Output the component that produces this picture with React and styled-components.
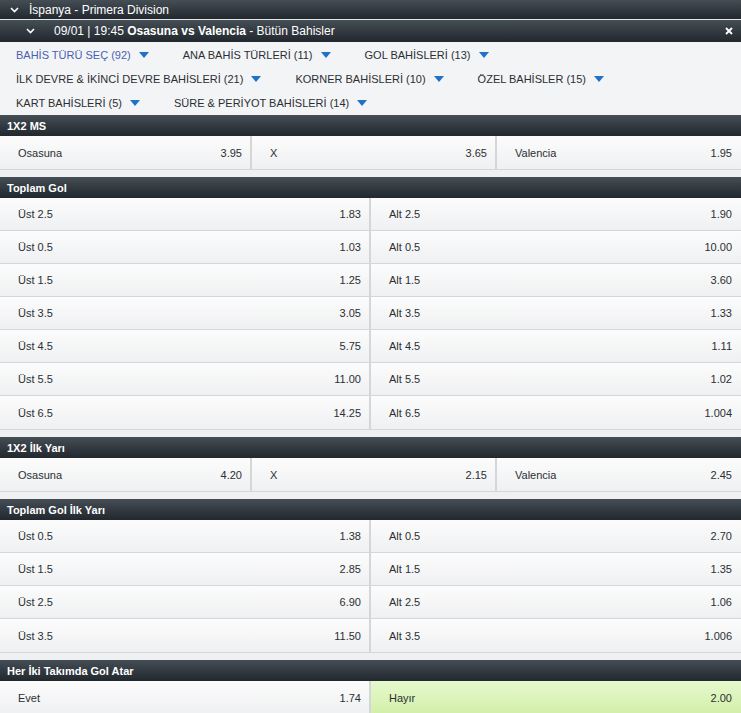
import React from 'react';
import styled, { createGlobalStyle } from 'styled-components';

const GlobalStyle = createGlobalStyle`
  html, body {
    margin: 0;
    padding: 0;
    background: #eef0f1;
  }
  body {
    font-family: "Liberation Sans", Arial, sans-serif;
    font-size: 11px;
    color: #2b2f33;
  }
`;

const Page = styled.div`
  width: 741px;
  background: #eef0f1;
`;

const darkBar = `
  background: linear-gradient(to bottom, #464e55 0%, #2f363d 60%, #22282e 100%);
  color: #fff;
`;

const LeagueBar = styled.div`
  ${darkBar}
  height: 19px;
  display: flex;
  align-items: center;
  padding-left: 10px;
  font-size: 12px;
  border-bottom: 1px solid #e3e6e8;
`;

const MatchBar = styled.div`
  ${darkBar}
  height: 22px;
  display: flex;
  align-items: center;
  padding-left: 26px;
  padding-right: 8px;
  font-size: 12px;
  b {
    font-weight: bold;
  }
`;

const Chevron = styled.svg`
  width: 9px;
  height: 6px;
  margin-right: ${props => props.$gap}px;
  flex: none;
`;

const MatchTitle = styled.div`
  flex: 1;
`;

const Close = styled.svg`
  width: 8px;
  height: 8px;
`;

const Filters = styled.div`
  background: #f3f4f6;
  display: flex;
  flex-wrap: wrap;
  padding: 1px 0 0 16px;
`;

const FilterItem = styled.div`
  display: flex;
  align-items: center;
  line-height: 24px;
  font-size: 11px;
  text-transform: uppercase;
  color: ${props => (props.$active ? '#4a5fb2' : '#2b2f33')};
  margin-right: 34px;
  white-space: nowrap;
`;

const Caret = styled.span`
  width: 0;
  height: 0;
  border-left: 5px solid transparent;
  border-right: 5px solid transparent;
  border-top: 6px solid #1f72c8;
  margin-left: 8px;
`;

const Market = styled.section`
  margin-bottom: 7px;
  border-bottom: 1px solid #d3d7da;
`;

const MarketTitle = styled.div`
  ${darkBar}
  height: 21px;
  display: flex;
  align-items: center;
  padding-left: 7px;
  font-weight: bold;
  font-size: 11px;
`;

const OddsGrid = styled.div`
  display: grid;
  grid-template-columns: ${props => props.$cols};
  column-gap: 2px;
  background: #d3d7da;
`;

const Cell = styled.div`
  height: 32px;
  border-bottom: 1px solid #d3d7da;
  display: flex;
  align-items: center;
  justify-content: space-between;
  padding: 0 8px 0 18px;
  font-size: 11px;
  color: #2b2f33;
  background: ${props =>
    props.$selected
      ? 'linear-gradient(to bottom, #e6f9cd 0%, #d3efa9 100%)'
      : 'linear-gradient(to bottom, #fcfcfc 0%, #eff0f2 100%)'};
  &:nth-last-child(-n + ${props => props.$lastCount}) {
    border-bottom: 0;
    height: 33px;
  }
`;

const Odd = styled.span`
  padding-right: ${props => (props.$edge ? 1 : 0)}px;
`;

const filterItems = [
  { label: 'Bahi̇s Türü Seç (92)', active: true },
  { label: 'Ana Bahi̇s Türleri̇ (11)' },
  { label: 'Gol Bahi̇sleri̇ (13)' },
  { label: 'İlk Devre & İki̇nci̇ Devre Bahi̇sleri̇ (21)' },
  { label: 'Korner Bahi̇sleri̇ (10)' },
  { label: 'Özel Bahi̇sler (15)' },
  { label: 'Kart Bahi̇sleri̇ (5)' },
  { label: 'Süre & Peri̇yot Bahi̇sleri̇ (14)' },
];

const markets = [
  {
    title: '1X2 MS',
    cols: '250fr 243fr 244fr',
    cells: [
      ['Osasuna', '3.95'],
      ['X', '3.65'],
      ['Valencia', '1.95'],
    ],
  },
  {
    title: 'Toplam Gol',
    cols: '369fr 370fr',
    cells: [
      ['Üst 2.5', '1.83'], ['Alt 2.5', '1.90'],
      ['Üst 0.5', '1.03'], ['Alt 0.5', '10.00'],
      ['Üst 1.5', '1.25'], ['Alt 1.5', '3.60'],
      ['Üst 3.5', '3.05'], ['Alt 3.5', '1.33'],
      ['Üst 4.5', '5.75'], ['Alt 4.5', '1.11'],
      ['Üst 5.5', '11.00'], ['Alt 5.5', '1.02'],
      ['Üst 6.5', '14.25'], ['Alt 6.5', '1.004'],
    ],
  },
  {
    title: '1X2 İlk Yarı',
    cols: '250fr 243fr 244fr',
    cells: [
      ['Osasuna', '4.20'],
      ['X', '2.15'],
      ['Valencia', '2.45'],
    ],
  },
  {
    title: 'Toplam Gol İlk Yarı',
    cols: '369fr 370fr',
    cells: [
      ['Üst 0.5', '1.38'], ['Alt 0.5', '2.70'],
      ['Üst 1.5', '2.85'], ['Alt 1.5', '1.35'],
      ['Üst 2.5', '6.90'], ['Alt 2.5', '1.06'],
      ['Üst 3.5', '11.50'], ['Alt 3.5', '1.006'],
    ],
  },
  {
    title: 'Her İki Takımda Gol Atar',
    cols: '369fr 370fr',
    cells: [
      ['Evet', '1.74'],
      ['Hayır', '2.00', true],
    ],
  },
];

const ChevronDown = ({ gap }) => (
  <Chevron $gap={gap} viewBox="0 0 9 6">
    <path d="M1 1 L4.5 4.5 L8 1" fill="none" stroke="#fff" strokeWidth="1.6" />
  </Chevron>
);

const App = () => {
  return (
    <Page>
      <GlobalStyle />
      <LeagueBar>
        <ChevronDown gap={10} />
        İspanya - Primera Division
      </LeagueBar>
      <MatchBar>
        <ChevronDown gap={19} />
        <MatchTitle>
          09/01 | 19:45 <b>Osasuna vs Valencia</b> - Bütün Bahisler
        </MatchTitle>
        <Close viewBox="0 0 8 8">
          <path d="M1 1 L7 7 M7 1 L1 7" stroke="#fff" strokeWidth="1.8" />
        </Close>
      </MatchBar>
      <Filters>
        {filterItems.map(item => (
          <FilterItem key={item.label} $active={item.active}>
            {item.label.toLocaleUpperCase('tr-TR').replace(/\u0307/g, '')}
            <Caret />
          </FilterItem>
        ))}
      </Filters>
      {markets.map(market => {
        const colCount = market.cols.split(' ').length;
        return (
          <Market key={market.title}>
            <MarketTitle>{market.title}</MarketTitle>
            <OddsGrid $cols={market.cols}>
              {market.cells.map(([label, odd, selected], i) => (
                <Cell key={i} $selected={selected} $lastCount={colCount}>
                  <span>{label}</span>
                  <Odd $edge={(i + 1) % colCount === 0}>{odd}</Odd>
                </Cell>
              ))}
            </OddsGrid>
          </Market>
        );
      })}
    </Page>
  );
};

export default App;
